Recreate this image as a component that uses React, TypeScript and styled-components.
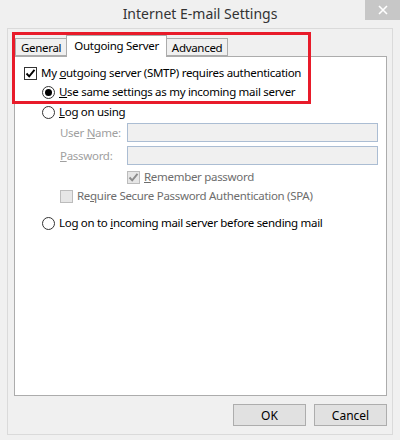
import styled, { createGlobalStyle } from 'styled-components';

const GlobalStyle = createGlobalStyle`
  html, body {
    margin: 0;
    padding: 0;
    background: #f0f0f0;
  }
  body {
    font-family: 'Noto Sans', 'Open Sans', sans-serif;
    font-size: 11.5px;
    letter-spacing: -0.3px;
    color: #000;
  }
`;

const Check = ({ disabled }: { disabled?: boolean }) => (
  <svg width="11" height="11" viewBox="0 0 11 11">
    <path
      d="M1.5 5.5 L4.2 8.3 L9.5 1.8"
      fill="none"
      stroke={disabled ? '#8c8c8c' : '#000'}
      strokeWidth="1.9"
    />
  </svg>
);

const App = () => {
  return (
    <Window>
      <GlobalStyle />
      <TitleBar>
        <span />
        <Title>Internet E-mail Settings</Title>
        <CloseButton>
          <svg width="10" height="10" viewBox="0 0 10 10">
            <path d="M1 1 L9 9 M9 1 L1 9" stroke="#fff" strokeWidth="1.6" />
          </svg>
        </CloseButton>
      </TitleBar>
      <Frame>
        <TabStrip>
          <Tab>General</Tab>
          <Tab $active>Outgoing Server</Tab>
          <Tab>Advanced</Tab>
        </TabStrip>
        <Panel>
          <Row $indent={9} $top={7}>
            <CheckBox>
              <Check />
            </CheckBox>
            <Label>
              My <u>o</u>utgoing server (SMTP) requires authentication
            </Label>
          </Row>
          <Row $indent={27} $top={1}>
            <Radio $checked />
            <Label>
              <u>U</u>se same settings as my incoming mail server
            </Label>
          </Row>
          <Row $indent={27} $top={2}>
            <Radio />
            <Label>
              <u>L</u>og on using
            </Label>
          </Row>
          <FieldRow $top={2}>
            <FieldLabel>
              User <u>N</u>ame:
            </FieldLabel>
            <Input />
          </FieldRow>
          <FieldRow $top={4}>
            <FieldLabel>
              <u>P</u>assword:
            </FieldLabel>
            <Input />
          </FieldRow>
          <Row $indent={112} $top={3}>
            <CheckBox $disabled>
              <Check disabled />
            </CheckBox>
            <Label $muted>
              <u>R</u>emember password
            </Label>
          </Row>
          <Row $indent={45} $top={1}>
            <CheckBox $disabled />
            <Label $muted>
              Re<u>q</u>uire Secure Password Authentication (SPA)
            </Label>
          </Row>
          <Row $indent={27} $top={9}>
            <Radio />
            <Label>
              Log on to <u>i</u>ncoming mail server before sending mail
            </Label>
          </Row>
        </Panel>
        <ButtonBar>
          <Button>OK</Button>
          <Button>Cancel</Button>
        </ButtonBar>
      </Frame>
      <Highlight />
    </Window>
  );
};

const Window = styled.div`
  position: relative;
  width: 400px;
  height: 440px;
  display: flex;
  flex-direction: column;
  background: #f0f0f0;
  overflow: hidden;
`;

const TitleBar = styled.div`
  height: 28px;
  display: grid;
  grid-template-columns: 1fr auto 1fr;
  align-items: start;
`;

const Title = styled.div`
  font-family: 'Noto Sans', sans-serif;
  font-size: 14px;
  letter-spacing: 0;
  color: #333;
  line-height: 28px;
`;

const CloseButton = styled.div`
  justify-self: end;
  width: 35px;
  height: 20px;
  background: #c7c7c7;
  display: flex;
  align-items: center;
  justify-content: center;
`;

const Frame = styled.div`
  flex: 1;
  margin: 0 7px 5px 7px;
  border: 1px solid #dadada;
  padding: 7px 5px 0 6px;
  display: flex;
  flex-direction: column;
`;

const TabStrip = styled.div`
  height: 20px;
  display: flex;
  align-items: flex-end;
  padding-left: 1px;
  position: relative;
  z-index: 1;
`;

const Tab = styled.div<{ $active?: boolean }>`
  box-sizing: border-box;
  height: ${(p) => (p.$active ? '22px' : '18px')};
  margin-bottom: ${(p) => (p.$active ? '-1px' : '0')};
  padding: ${(p) => (p.$active ? '1px 7px 0' : '1px 5px 0')};
  border: 1px solid #acacac;
  border-bottom: ${(p) => (p.$active ? 'none' : '1px solid #acacac')};
  background: ${(p) => (p.$active ? '#fff' : '#f0f0f0')};
  line-height: ${(p) => (p.$active ? '18px' : '15px')};
  white-space: nowrap;
  & + & {
    margin-left: -1px;
  }
`;

const Panel = styled.div`
  height: 340px;
  box-sizing: border-box;
  background: #fff;
  border: 1px solid #acacac;
  display: flex;
  flex-direction: column;
`;

const Row = styled.div<{ $indent: number; $top: number }>`
  height: 18px;
  margin-top: ${(p) => p.$top}px;
  padding-left: ${(p) => p.$indent}px;
  display: flex;
  align-items: center;
  gap: 3px;
  white-space: nowrap;
`;

const Label = styled.span<{ $muted?: boolean }>`
  color: ${(p) => (p.$muted ? '#6d6d6d' : '#000')};
  line-height: 18px;
  margin-left: 1px;
`;

const CheckBox = styled.div<{ $disabled?: boolean }>`
  box-sizing: border-box;
  width: 13px;
  height: 13px;
  border: 1px solid ${(p) => (p.$disabled ? '#bcbcbc' : '#333')};
  background: ${(p) => (p.$disabled ? '#e6e6e6' : '#fff')};
  display: flex;
  align-items: center;
  justify-content: center;
`;

const Radio = styled.div<{ $checked?: boolean }>`
  box-sizing: border-box;
  width: 13px;
  height: 13px;
  border-radius: 50%;
  border: 1px solid #333;
  background: #fff;
  display: flex;
  align-items: center;
  justify-content: center;
  &::after {
    content: '';
    display: ${(p) => (p.$checked ? 'block' : 'none')};
    width: 7px;
    height: 7px;
    border-radius: 50%;
    background: #000;
  }
`;

const FieldRow = styled.div<{ $top: number }>`
  margin-top: ${(p) => p.$top}px;
  padding-left: 45px;
  padding-right: 8px;
  display: flex;
  align-items: center;
`;

const FieldLabel = styled.span`
  width: 67px;
  color: #a0a0a0;
  white-space: nowrap;
`;

const Input = styled.div`
  flex: 1;
  box-sizing: border-box;
  height: 19px;
  border: 1px solid #abbdd3;
  background: #f0f0f0;
`;

const ButtonBar = styled.div`
  display: flex;
  justify-content: flex-end;
  gap: 8px;
  margin-top: 8px;
`;

const Button = styled.button`
  box-sizing: border-box;
  width: 73px;
  height: 22px;
  border: 1px solid #adadad;
  background: #e1e1e1;
  font-family: 'Noto Sans', sans-serif;
  font-size: 12px;
  color: #000;
  padding: 0;
`;

const Highlight = styled.div`
  position: absolute;
  left: 12px;
  top: 32px;
  width: 299px;
  height: 72px;
  box-sizing: border-box;
  border: 3px solid #e81b2a;
  pointer-events: none;
`;

export default App;
